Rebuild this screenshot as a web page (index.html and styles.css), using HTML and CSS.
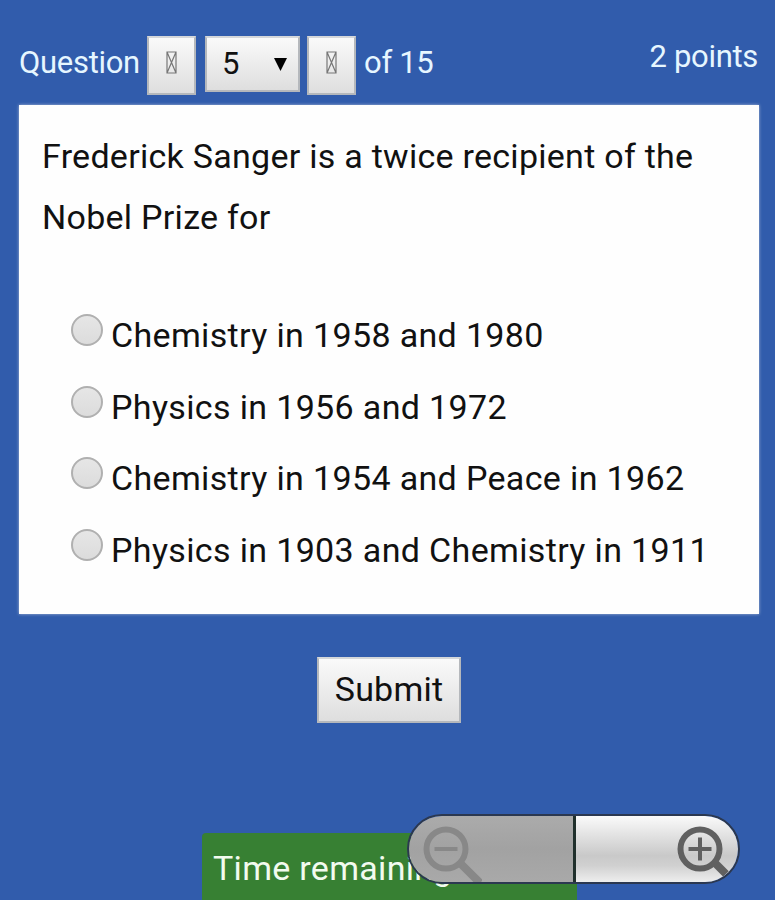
FILE: index.html
```html
<!DOCTYPE html>
<html lang="en">
<head>
    <meta charset="UTF-8">
    <meta name="viewport" content="width=device-width, initial-scale=1.0">
    <title>Quiz - Question 5</title>
    <link rel="stylesheet" href="styles.css">
</head>
<body>
    <div class="quiz">
        <div class="quiz__header">
            <span class="label">Question</span>
            <button class="nav-btn prev" type="button" aria-label="Previous">
                <svg width="11" height="23" viewBox="0 0 11 23"><path d="M1 1h9v21H1zM1 1l9 21M10 1L1 22"/></svg>
            </button>
            <div class="select__container">
                <select id="question" class="select">
                    <option>5</option>
                </select>
                <svg class="arrow" width="13" height="13" viewBox="0 0 13 13"><path d="M0 0h13L6.5 13z"/></svg>
            </div>
            <button class="nav-btn next" type="button" aria-label="Next">
                <svg width="11" height="23" viewBox="0 0 11 23"><path d="M1 1h9v21H1zM1 1l9 21M10 1L1 22"/></svg>
            </button>
            <span class="total">of 15</span>
            <span class="points">2 points</span>
        </div>
        <div class="card">
            <p class="card__question">Frederick Sanger is a twice recipient of the Nobel Prize for</p>
            <label class="option"><input type="radio" name="answer"><span>Chemistry in 1958 and 1980</span></label>
            <label class="option"><input type="radio" name="answer"><span>Physics in 1956 and 1972</span></label>
            <label class="option"><input type="radio" name="answer"><span>Chemistry in 1954 and Peace in 1962</span></label>
            <label class="option"><input type="radio" name="answer"><span>Physics in 1903 and Chemistry in 1911</span></label>
        </div>
        <button class="submit-btn" type="button">Submit</button>
    </div>
    <div class="timer">Time remaining</div>
    <div class="zoom">
        <div class="zoom__out">
            <svg width="62" height="66" viewBox="0 0 62 66">
                <path class="handle" d="M39 46L60 67"/>
                <circle cx="26" cy="33" r="19.5"/>
                <path class="sign" d="M14.500 33h23"/>
            </svg>
        </div>
        <div class="zoom__in">
            <svg width="56" height="66" viewBox="0 0 56 66">
                <path class="handle" d="M39 46L51 58"/>
                <circle cx="25" cy="33" r="19.5"/>
                <path class="sign" d="M13.500 33h23M25 21.500v23"/>
            </svg>
        </div>
    </div>
</body>
</html>
```
FILE: styles.css
```css
*{
    box-sizing: border-box;
}
body{
    margin: 0;
    height: 900px;
    overflow: hidden;
    position: relative;
    background: #315cac;
    font-family: Roboto, sans-serif;
    color: #111;
}
.quiz{
    width: 740px;
    margin-left: 19px;
}
.quiz__header{
    display: flex;
    align-items: flex-start;
    height: 105px;
    padding-top: 36px;
    font-size: 31px;
    letter-spacing: -.3px;
    line-height: 36px;
    color: #e6f6ff;
}
.label{
    width: 128px;
    margin-top: 9px;
}
.total{
    margin: 9px 0 0 8px;
}
.points{
    margin: 3px 1px 0 auto;
}
.nav-btn,
.select__container,
.submit-btn{
    border: 2px solid #b5b8bc;
    border-top-color: #d4d7da;
    background: linear-gradient(#fafafa, #dedede);
}
.nav-btn{
    width: 49px;
    height: 59px;
    padding: 0 0 6px;
    display: flex;
    align-items: center;
    justify-content: center;
}
.nav-btn path{
    fill: none;
    stroke: #777;
    stroke-width: 1.2;
}
.select__container{
    display: flex;
    align-items: center;
    width: 95px;
    height: 56px;
    margin: 0 7px 0 9px;
    padding: 0 11px 0 15px;
}
.select{
    appearance: none;
    flex: 1;
    min-width: 0;
    height: 52px;
    padding: 0 0 2px;
    border: none;
    background: none;
    font: 31px Roboto, sans-serif;
    color: #111;
}
.card{
    height: 509px;
    padding: 21px 23px 0;
    background: #fefefe;
    box-shadow: 0 0 3px #a9b8d4;
}
.card__question{
    margin: 0 0 51px;
    font-size: 34px;
    line-height: 61px;
    letter-spacing: .27px;
}
.option{
    display: flex;
    align-items: center;
    height: 71.700px;
    padding-left: 29px;
    font-size: 34px;
    letter-spacing: .35px;
    white-space: nowrap;
}
.option input{
    appearance: none;
    width: 32px;
    height: 32px;
    margin: 0 8px 10px 0;
    border: 2px solid #b0b0b0;
    border-radius: 50%;
    background: linear-gradient(#e6e6e6, #dcdcdc);
}
.submit-btn{
    display: block;
    width: 144px;
    height: 66px;
    margin: 43px 0 0 298px;
    padding: 0 0 2px;
    font: 34px Roboto, sans-serif;
    letter-spacing: .2px;
    color: #111;
}
/* floating bits over the page */
.timer{
    position: absolute;
    left: 202px;
    bottom: 0;
    width: 375px;
    height: 67px;
    padding: 15px 0 0 11px;
    border-radius: 4px 0 0 0;
    background: #378033;
    font-size: 34px;
    letter-spacing: .3px;
    line-height: 40px;
    color: #f2fbef;
}
.zoom{
    position: absolute;
    left: 407px;
    top: 814px;
    display: flex;
    width: 333px;
    height: 70px;
    border: 2px solid #2b3850;
    border-radius: 35px;
    overflow: hidden;
}
.zoom__out{
    width: 167px;
    padding-left: 11px;
    border-right: 3px solid #20302c;
    background: linear-gradient(#ababab, #a2a2a2 50%, #a9a9a9);
}
.zoom__in{
    flex: 1;
    display: flex;
    justify-content: flex-end;
    padding-right: 7px;
    background: linear-gradient(#fafafa, #c9c9c9 60%, #d0d0d0 75%, #eee);
}
.zoom svg{
    fill: none;
    stroke: #888;
    stroke-width: 6;
}
.zoom .handle{
    stroke-width: 8;
}
.zoom .sign{
    stroke-width: 4;
}
.zoom__in svg{
    stroke: #606060;
}
```
